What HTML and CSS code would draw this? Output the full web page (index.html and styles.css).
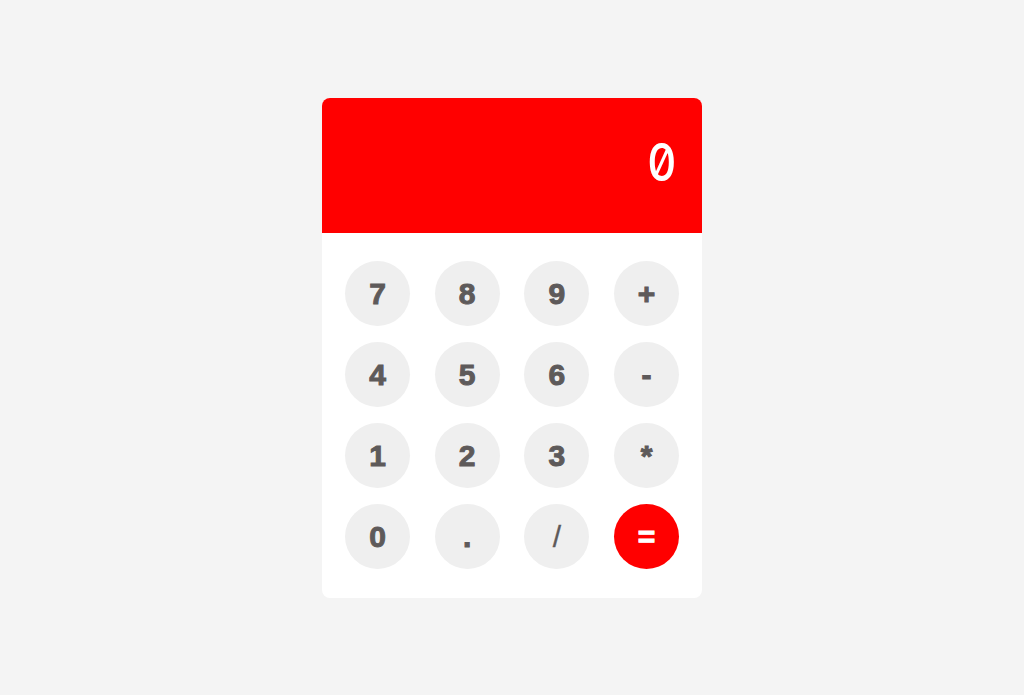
FILE: index.html
```html
<!DOCTYPE html>
<html>
<head>
<meta charset="utf-8">
<link rel="stylesheet" href="styles.css">
</head>
<body>
<div class="calc">
  <div class="display"><span class="value">0</span></div>
  <div class="keys">
    <button class="key">7</button>
    <button class="key">8</button>
    <button class="key">9</button>
    <button class="key">+</button>
    <button class="key">4</button>
    <button class="key">5</button>
    <button class="key">6</button>
    <button class="key">-</button>
    <button class="key">1</button>
    <button class="key">2</button>
    <button class="key">3</button>
    <button class="key">*</button>
    <button class="key">0</button>
    <button class="key">.</button>
    <button class="key thin">/</button>
    <button class="key equals">=</button>
  </div>
</div>
</body>
</html>
```
FILE: styles.css
```css
html, body {
  margin: 0;
  padding: 0;
  background: #f4f4f4;
}
body {
  display: flex;
  justify-content: center;
  padding-top: 98px;
}
.calc {
  width: 380px;
  height: 500px;
  background: #ffffff;
  border-radius: 8px;
  overflow: hidden;
  display: flex;
  flex-direction: column;
}
.display {
  height: 135px;
  background: #ff0000;
  color: #ffffff;
  display: flex;
  align-items: center;
  justify-content: flex-end;
  padding: 0 25px 6px;
  box-sizing: border-box;
}
.value {
  font-family: "Inter", sans-serif;
  font-weight: 500;
  font-size: 52px;
  font-feature-settings: "zero" 1, "tnum" 1;
  display: inline-block;
  transform: scaleX(0.88);
  transform-origin: right center;
}
.keys {
  display: grid;
  grid-template-columns: repeat(4, 65px);
  grid-auto-rows: 65px;
  column-gap: 24.67px;
  row-gap: 16px;
  padding: 28px 23px;
}
.key {
  width: 65px;
  height: 65px;
  border: none;
  border-radius: 50%;
  background: #efefef;
  color: #5e5a5a;
  font-family: "Liberation Sans", Arial, sans-serif;
  font-weight: bold;
  font-size: 30px;
  -webkit-text-stroke: 1px #5e5a5a;
  padding: 0;
  display: flex;
  align-items: center;
  justify-content: center;
}
.thin {
  font-weight: normal;
  -webkit-text-stroke: 0.3px #5e5a5a;
}
.equals {
  background: #ff0000;
  color: #ffffff;
  -webkit-text-stroke: 1px #ffffff;
}
```
